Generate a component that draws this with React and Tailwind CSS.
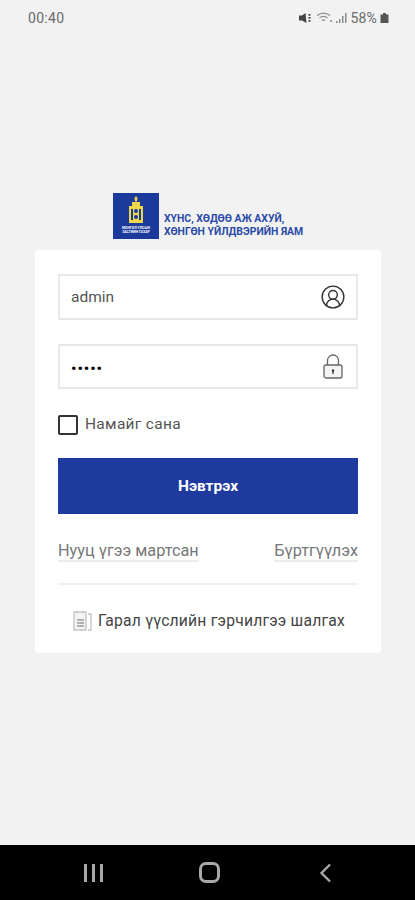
import { CircleUserRound } from 'lucide-react'

function StatusBar() {
  return (
    <div className="flex h-9 shrink-0 items-center justify-between pl-[28px] pr-[26px] text-[#6b6b6b]">
      <span className="text-[14px] tracking-[0.3px]">00:40</span>
      <div className="flex items-center gap-[3px]">
        {/* mute */}
        <svg width="14" height="12" viewBox="0 0 14 12" fill="#444">
          <path d="M0 3.500h3L6.500 1l1 10L3 8.500H0z" />
          <path d="M9.500 2h2v1.800h-2zM9.500 5h2v1.800h-2zM9.500 8h2v1.800h-2z" />
        </svg>
        {/* wifi */}
        <svg width="17" height="12" viewBox="0 0 17 12" fill="none" stroke="#8a8a8a" strokeWidth="1.300">
          <path d="M1 3.500C5 .5 10 .5 14 3.500M3.500 6C6 4 9 4 11.500 6M6 8.500c1-.8 2-.8 3 0" />
          <circle cx="15" cy="9" r="1" fill="#8a8a8a" stroke="none" />
        </svg>
        {/* signal */}
        <svg width="11" height="12" viewBox="0 0 11 12" fill="#8a8a8a">
          <rect x="0" y="9" width="1.500" height="2" />
          <rect x="3" y="7" width="1.500" height="4" />
          <rect x="6" y="4" width="1.500" height="7" />
          <rect x="9" y="1" width="1.500" height="10" />
        </svg>
        <span className="text-[14px] tracking-[0.2px]">58%</span>
        <svg width="9" height="12" viewBox="0 0 9 12" fill="#555">
          <path d="M3 1h3v1.500h2.500V11H.5V2.500H3z" />
        </svg>
      </div>
    </div>
  )
}

function Logo() {
  return (
    <div className="ml-[113px] flex items-end gap-[5px]">
      <div className="flex h-[46px] w-[46px] flex-col items-center bg-[#1c3a9c] pt-[3px]">
        <svg width="18" height="28" viewBox="0 0 16 28">
          <rect x="1" y="10" width="14" height="17" fill="#f0d848" />
          <rect x="4" y="6" width="8" height="5" fill="#f0d848" />
          <path d="M8 0c2 2 2 4 0 6-2-2-2-4 0-6z" fill="#f0d848" />
          <rect x="3" y="13" width="2" height="11" fill="#1c3a9c" />
          <rect x="11" y="13" width="2" height="11" fill="#1c3a9c" />
          <circle cx="8" cy="15" r="2" fill="#1c3a9c" />
          <circle cx="8" cy="21" r="2" fill="#1c3a9c" />
        </svg>
        <div className="mt-[2px] text-center text-[3.500px] font-bold leading-[4px] text-white">
          МОНГОЛ УЛСЫН
          <br />
          ЗАСГИЙН ГАЗАР
        </div>
      </div>
      <div className="pb-[1px] text-[10.400px] font-bold leading-[13px] text-[#2a4aa8]">
        ХҮНС, ХӨДӨӨ АЖ АХУЙ,
        <br />
        ХӨНГӨН ҮЙЛДВЭРИЙН ЯАМ
      </div>
    </div>
  )
}

function Field({ value, icon, dots, height }) {
  return (
    <div className={`flex items-center justify-between border-2 border-[#e8e8e8] bg-white pl-[11px] pr-[11px] ${height}`}>
      <span className={dots ? 'pt-[6px] text-[15px] font-bold tracking-[1px] text-black' : 'pt-[2px] text-[15.500px] text-[#555]'}>{value}</span>
      {icon}
    </div>
  )
}

function LockIcon() {
  return (
    <svg width="22" height="26" viewBox="0 0 22 26" fill="none" stroke="#666" strokeWidth="1.300" className="mr-[1px]">
      <path d="M5.500 11V6.500a5.500 5.500 0 0 1 11 0V11" />
      <rect x="2" y="11" width="18" height="13" rx="2" fill="#f4f4f4" />
      <circle cx="11" cy="16.500" r="1.200" fill="#333" stroke="none" />
      <path d="M11 17v3" stroke="#333" />
    </svg>
  )
}

function LoginCard() {
  return (
    <div className="ml-[35px] mt-[11px] h-[403px] w-[346px] rounded-[4px] bg-white px-[23px] pt-[24px]">
      <Field
        value="admin"
        height="h-[46px]"
        icon={<CircleUserRound size={26} strokeWidth={1.300} className="-mr-[1px] text-[#333]" />}
      />
      <div className="mt-[24px]">
        <Field value="•••••" dots height="h-[45px]" icon={<LockIcon />} />
      </div>
      <div className="mt-[24px] flex items-center gap-[7px]">
        <div className="h-[20px] w-[20px] rounded-[2px] border-2 border-[#333]" />
        <span className="text-[15.500px] tracking-[0.3px] text-[#555]">Намайг сана</span>
      </div>
      <button className="mt-[22px] flex h-[56px] w-full items-center justify-center bg-[#1e3a9f] text-[15.500px] font-bold text-white">
        Нэвтрэх
      </button>
      <div className="mt-[28px] flex items-center justify-between text-[16.300px] leading-[18px] text-[#777]">
        <span className="border-b-2 border-[#ececec]">Нууц үгээ мартсан</span>
        <span className="border-b-2 border-[#ececec]">Бүртгүүлэх</span>
      </div>
      <div className="mt-[21px] h-[2px] bg-[#f0f0f0]" />
      <div className="mt-[24px] flex items-center justify-center gap-[5px]">
        <svg width="22" height="22" viewBox="0 0 22 22" fill="none" stroke="#c4c4c4" strokeWidth="1.300">
          <path d="M3 2h12l0 18H3z" fill="#f4f4f4" />
          <path d="M17 4h3v16h-3" />
          <path d="M6 1v2.500M12 1v2.500" />
          <path d="M6 10h7M6 13h7M6 16h7" stroke="#9a9a9a" />
        </svg>
        <span className="text-[15.700px] tracking-[0.2px] text-[#444]">Гарал үүслийн гэрчилгээ шалгах</span>
      </div>
    </div>
  )
}

function NavBar() {
  return (
    <div className="mt-auto flex h-[55px] shrink-0 items-center bg-black pl-[84px]">
      <div className="flex gap-[5px]">
        <div className="h-[18px] w-[3px] bg-[#a8a8a8]" />
        <div className="h-[18px] w-[3px] bg-[#a8a8a8]" />
        <div className="h-[18px] w-[3px] bg-[#a8a8a8]" />
      </div>
      <div className="ml-[96px] h-[21px] w-[21px] rounded-[7px] border-[3px] border-[#a8a8a8]" />
      <svg width="14" height="20" viewBox="0 0 14 20" fill="none" stroke="#a8a8a8" strokeWidth="2.400" className="ml-[99px]">
        <path d="M11 1.500 2.500 10l8.500 8.500" />
      </svg>
    </div>
  )
}

export default function App() {
  return (
    <div className="flex h-[900px] flex-col bg-[#f2f2f2] font-['Roboto',sans-serif]">
      <StatusBar />
      <div className="pt-[157px]">
        <Logo />
        <LoginCard />
      </div>
      <NavBar />
    </div>
  )
}
